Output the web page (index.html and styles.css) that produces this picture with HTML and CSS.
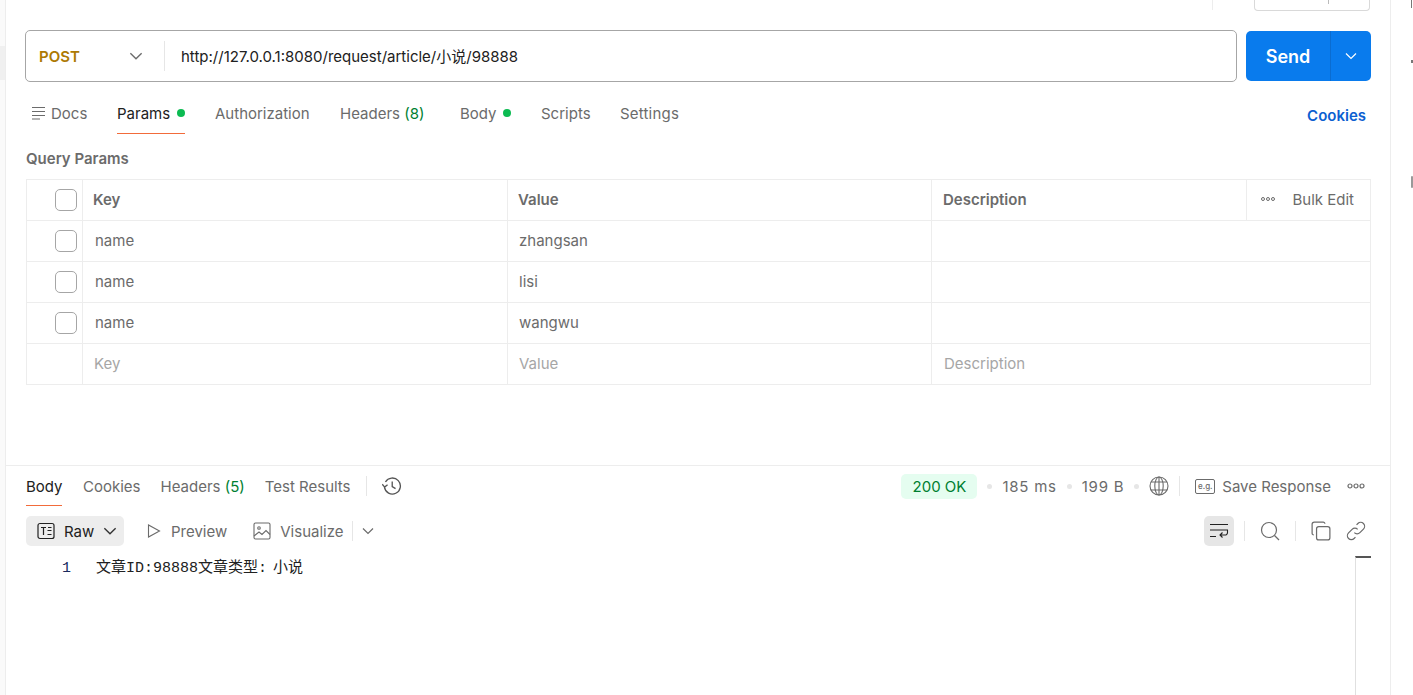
FILE: index.html
```html
<!DOCTYPE html>
<html lang="en">
<head>
<meta charset="utf-8">
<title>Postman</title>
<link rel="stylesheet" href="styles.css">
</head>
<body>
<div class="app">
  <aside class="left-rail"><div class="rail-active"></div></aside>
  <main class="main">
    <section class="request">
      <div class="top-strip">
        <div class="top-divider"></div>
        <div class="top-box"><span class="top-box-split"></span></div>
      </div>
      <div class="url-row">
        <div class="url-bar">
          <div class="method"><span class="method-name">POST</span>
            <svg class="ic-chev method-chev" viewBox="0 0 16 16"><path d="M3 5.500l5 5 5-5"/></svg>
          </div>
          <div class="url-text">http://127.0.0.1:8080/request/article/小说/98888</div>
        </div>
        <div class="send">
          <div class="send-main">Send</div>
          <div class="send-arrow"><svg class="ic-chev white" viewBox="0 0 16 16"><path d="M3 5.500l5 5 5-5"/></svg></div>
        </div>
      </div>
      <nav class="req-tabs">
        <div class="tab docs">
          <svg class="ic-docs" viewBox="0 0 14 14"><path d="M0 1.500h13M0 5.500h13M0 9.500h13M0 13h8"/></svg>Docs</div>
        <div class="tab active params">Params<i class="dot"></i></div>
        <div class="tab auth">Authorization</div>
        <div class="tab headers">Headers <em class="count">(8)</em></div>
        <div class="tab body-tab">Body<i class="dot"></i></div>
        <div class="tab scripts">Scripts</div>
        <div class="tab settings">Settings</div>
        <div class="cookies">Cookies</div>
      </nav>
      <div class="query-title">Query Params</div>
      <div class="params-table">
        <div class="row head">
          <div class="c c-check"><span class="checkbox"></span></div>
          <div class="c c-key">Key</div>
          <div class="c c-val">Value</div>
          <div class="c c-desc">Description</div>
          <div class="c c-bulk">
            <svg class="ic-dots" viewBox="0 0 14 4"><circle cx="2" cy="2" r="1.500"/><circle cx="7" cy="2" r="1.500"/><circle cx="12" cy="2" r="1.500"/></svg>
            <span>Bulk Edit</span>
          </div>
        </div>
        <div class="row">
          <div class="c c-check"><span class="checkbox"></span></div>
          <div class="c c-key cell">name</div>
          <div class="c c-val cell">zhangsan</div>
          <div class="c c-desc wide"></div>
        </div>
        <div class="row">
          <div class="c c-check"><span class="checkbox"></span></div>
          <div class="c c-key cell">name</div>
          <div class="c c-val cell">lisi</div>
          <div class="c c-desc wide"></div>
        </div>
        <div class="row">
          <div class="c c-check"><span class="checkbox"></span></div>
          <div class="c c-key cell">name</div>
          <div class="c c-val cell">wangwu</div>
          <div class="c c-desc wide"></div>
        </div>
        <div class="row last">
          <div class="c c-check"></div>
          <div class="c c-key cell ph">Key</div>
          <div class="c c-val cell ph">Value</div>
          <div class="c c-desc wide cell ph">Description</div>
        </div>
      </div>
    </section>
    <section class="response">
      <div class="res-head">
        <div class="tab active res-body">Body</div>
        <div class="tab res-tab">Cookies</div>
        <div class="tab res-tab">Headers <em class="count">(5)</em></div>
        <div class="tab res-tab">Test Results</div>
        <span class="vsep hist-sep"></span>
        <svg class="ic-history" viewBox="1 1 18 18"><path d="M3.200 11a7.200 7.200 0 1 0 .9-4.600M1.200 8.400l2.200 2.600 2.600-2.200M10.200 6v4.600l3 1.800"/></svg>
        <div class="res-meta">
          <span class="status">200 OK</span>
          <i class="meta-dot"></i><span class="metric">185 ms</span>
          <i class="meta-dot"></i><span class="metric">199 B</span>
          <i class="meta-dot"></i>
          <svg class="ic-globe" viewBox="0 0 20 20"><circle cx="10" cy="10" r="9"/><ellipse cx="10" cy="10" rx="4.200" ry="9"/><path d="M2 6h16M2 14h16M10 1v18"/></svg>
          <span class="vsep"></span>
          <span class="eg">e.g.</span><span>Save Response</span>
          <svg class="ic-dots big" viewBox="0 0 18 6"><circle cx="3" cy="3" r="2"/><circle cx="9" cy="3" r="2"/><circle cx="15" cy="3" r="2"/></svg>
        </div>
      </div>
      <div class="res-tools">
        <div class="raw">
          <svg class="ic-raw" viewBox="0 0 18 18"><rect x="1" y="1.500" width="16" height="15" rx="2"/><path d="M4 5.500h5M6.500 5.500v7.500M10.500 8.500h4M10.500 12.500h4M11 5.500h3.500"/></svg>
          <span>Raw</span>
          <svg class="ic-chev dark" viewBox="0 0 16 16"><path d="M3 5.500l5 5 5-5"/></svg>
        </div>
        <div class="tool preview">
          <svg class="ic-play" viewBox="0 0 14 14"><path d="M1.500 1v12l11-6z"/></svg>Preview</div>
        <div class="tool visualize">
          <svg class="ic-image" viewBox="0 0 18 18"><rect x="1" y="1" width="16" height="16" rx="1.500"/><circle cx="6" cy="6" r="1.300"/><path d="M1 14l5-4 3 2.500 4-4 4 4"/></svg>Visualize</div>
        <span class="vsep"></span>
        <svg class="ic-chev grey" viewBox="0 0 16 16"><path d="M3 5.500l5 5 5-5"/></svg>
        <div class="tools-right">
          <div class="wrap-btn">
            <svg viewBox="0 0 20 16"><path d="M1 1.500h18M1 7h18M1 13.500h6M18.500 7v2.500a2.500 2.500 0 0 1-2.500 2.500h-5M13.500 9.500L11 12l2.500 2.500"/></svg>
          </div>
          <span class="vsep"></span>
          <svg class="ic-search" viewBox="0 0 20 20"><circle cx="9" cy="9" r="7.500"/><path d="M14.500 14.500l4.500 4.500"/></svg>
          <span class="vsep"></span>
          <svg class="ic-copy" viewBox="0 0 18 18"><rect x="5" y="5" width="12" height="12" rx="2"/><path d="M2.500 12.500A1.500 1.500 0 0 1 1 11V3a2 2 0 0 1 2-2h8a1.500 1.500 0 0 1 1.500 1.500"/></svg>
          <svg class="ic-link" viewBox="0 0 18 18"><path d="M7.500 10.500a3.500 3.500 0 0 0 5 0l3.200-3.200a3.500 3.500 0 0 0-5-5L9.500 3.500M10.500 7.500a3.500 3.500 0 0 0-5 0l-3.200 3.200a3.500 3.500 0 0 0 5 5l1.200-1.200"/></svg>
        </div>
      </div>
      <div class="code">
        <div class="line-no">1</div>
        <div class="code-text">文章ID:98888文章类型: 小说</div>
        <div class="scrollbar"></div>
      </div>
    </section>
  </main>
  <aside class="right-rail">
    <span class="rail-mark m1"></span>
    <span class="rail-mark m2"></span>
    <span class="rail-mark m3"></span>
  </aside>
</div>
</body>
</html>
```

FILE: styles.css
```css
* { box-sizing: border-box; }
html, body { margin: 0; height: 100%; overflow: hidden; background: #fff; }
body { font-family: Inter, "Noto Sans CJK SC", sans-serif; font-size: 15px; color: #6b6b6b; }
.app { display: flex; height: 695px; width: 1413px; }
.left-rail { width: 6px; flex: none; background: #fafafa; border-right: 1px solid #ededed; padding-top: 46px; }
.rail-active { height: 34px; background: #f0f0f0; }
.main { width: 1385px; flex: none; border-right: 1px solid #ededed; display: flex; flex-direction: column; }
.right-rail { flex: 1; position: relative; }
.rail-mark { position: absolute; left: 20px; width: 3px; background: #777; }
.m1 { top: 0; height: 8px; left: 20px; width: 1px; }
.m2 { top: 60px; height: 3px; left: 20px; }
.m3 { top: 176px; height: 12px; left: 20px; width: 2px; border-radius: 2px; background: #999; }

.request { height: 465px; flex: none; padding-left: 19px; padding-right: 19px; }
.top-strip { height: 30px; display: flex; align-items: flex-start; }
.top-divider { width: 1px; height: 10px; background: #ededed; margin-left: 1187px; }
.top-box { width: 116px; height: 11px; margin-left: 41px; border: 1px solid #d9d9d9; border-top: 0; border-radius: 0 0 4px 4px; position: relative; }
.top-box-split { position: absolute; left: 73px; top: 0; width: 1px; height: 4px; background: #bbb; }

.url-row { display: flex; gap: 9px; height: 52px; }
.url-bar { width: 1212px; flex: none; border: 1px solid #a6a6a6; border-radius: 5px; display: flex; align-items: center; }
.method { width: 139px; height: 30px; flex: none; padding-left: 13px; padding-right: 19px; display: flex; align-items: center; justify-content: space-between; border-right: 1px solid #e6e6e6; }
.method-name { color: #ad7a03; font-weight: 600; }
.ic-chev { width: 16px; height: 16px; fill: none; stroke: #6b6b6b; stroke-width: 1.200; flex: none; }
.method-chev { width: 18px; height: 18px; }
.ic-chev.white { stroke: #fff; width: 16px; height: 16px; }
.ic-chev.dark { stroke: #333; width: 18px; height: 18px; margin-left: -2px; }
.ic-chev.grey { width: 16px; height: 16px; margin-left: 7px; }
.url-text { padding-left: 16px; color: #212121; position: relative; top: -1px; }

.send { width: 125px; height: 50px; margin-top: 1px; background: #097bed; border-radius: 5px; display: flex; color: #fff; }
.send-main { width: 85px; display: flex; align-items: center; justify-content: center; font-weight: 600; font-size: 18px; border-right: 1px solid #0a6cd0; }
.send-arrow { flex: 1; display: flex; align-items: center; justify-content: center; }

.req-tabs { display: flex; height: 69px; position: relative; align-items: flex-start; }
.tab { color: #6b6b6b; display: flex; align-items: center; white-space: pre; height: 20px; }
.req-tabs .tab { margin-top: 21px; }
.docs { margin-left: 7px; width: 85px; }
.ic-docs { width: 14px; height: 14px; fill: none; stroke: #6b6b6b; stroke-width: 1.200; margin-right: 5px; }
.params { width: 98px; position: relative; }
.tab.active { color: #212121; }
.params::after { content: ""; position: absolute; left: 0; top: 30px; width: 68px; height: 1px; background: #f26b3a; }
.dot { width: 8px; height: 8px; border-radius: 50%; background: #0cbb52; margin-left: 7px; margin-top: -1px; }
.auth { width: 125px; }
.headers { width: 120px; }
.count { font-style: normal; color: #007f31; }
.body-tab { width: 81px; }
.body-tab .dot { margin-left: 6px; }
.scripts { width: 79px; }
.settings { letter-spacing: 0.2px; }
.cookies { margin-left: auto; margin-top: 24px; margin-right: 5px; color: #0c5fd1; font-weight: 600; height: 20px; line-height: 20px; }

.query-title { font-weight: 600; color: #6b6b6b; height: 21px; line-height: 17px; margin-left: 1px; margin-top: -1px; }
.params-table { border: 1px solid #ededed; border-bottom: 0; width: 1345px; margin-left: 1px; margin-top: 8px; }
.row { display: flex; height: 41px; border-bottom: 1px solid #ededed; }
.c { display: flex; align-items: center; height: 100%; padding-bottom: 2px; }
.c-check { width: 56px; flex: none; justify-content: flex-end; padding-right: 5px; padding-bottom: 0; border-right: 1px solid #ededed; }
.checkbox { width: 22px; height: 22px; border: 1px solid #a6a6a6; border-radius: 5px; display: block; }
.c-key { width: 425px; flex: none; padding-left: 10px; border-right: 1px solid #ededed; }
.c-val { width: 424px; flex: none; padding-left: 10px; border-right: 1px solid #ededed; }
.c-desc { width: 315px; flex: none; padding-left: 11px; }
.head .c-desc { width: 314px; }
.c-desc.wide { flex: 1; width: auto; }
.head .c { font-weight: 600; }
.cell { padding-left: 11px; font-weight: 400; }
.c-key.cell { padding-left: 12px; }
.c-key.cell.ph { padding-left: 11px; }
.c-desc.cell { padding-left: 12px; }
.ph { color: #a6a6a6; }
.head .c-bulk { flex: 1; border-left: 1px solid #ededed; padding-left: 14px; font-weight: 400; justify-content: space-between; padding-right: 16px; }
.ic-dots { width: 14px; height: 4px; fill: none; stroke: #6b6b6b; stroke-width: 1; }
.ic-dots.big { width: 18px; height: 6px; margin-left: 16px; stroke-width: 1.200; }

.response { flex: 1; border-top: 1px solid #ededed; padding-left: 20px; padding-right: 20px; }
.res-head { height: 40px; display: flex; align-items: center; position: relative; }
.res-head .tab { height: 40px; }
.res-body { width: 57px; position: relative; }
.res-body::after { content: ""; position: absolute; left: 0; bottom: 0; width: 36px; height: 1px; background: #f26b3a; }
.res-tab { margin-right: 20px; }
.vsep { width: 1px; height: 20px; background: #e6e6e6; flex: none; }
.hist-sep { margin-left: -5px; }
.ic-history { width: 20px; height: 20px; fill: none; stroke: #555; stroke-width: 1.200; margin-left: 15px; }
.res-meta { margin-left: auto; display: flex; align-items: center; margin-right: 5px; }
.status { height: 25px; width: 76px; background: #e5fdf0; color: #007f31; border-radius: 5px; display: flex; align-items: center; justify-content: center; }
.metric { letter-spacing: 0.75px; }
.meta-dot { width: 5px; height: 5px; border-radius: 50%; background: #e6e6e6; margin: 0 10px; }
.ic-globe { width: 20px; height: 20px; fill: none; stroke: #6b6b6b; stroke-width: 1.100; margin-right: 10px; }
.eg { width: 20px; height: 15px; border: 1px solid #6b6b6b; border-radius: 2px; font-size: 8px; display: flex; align-items: center; justify-content: center; margin-left: 15px; margin-right: 7px; font-weight: 500; }

.res-tools { height: 50px; display: flex; align-items: center; }
.raw { width: 98px; height: 30px; background: #ededed; border-radius: 5px; color: #212121; display: flex; align-items: center; padding-left: 11px; gap: 9px; }
.ic-raw { width: 18px; height: 18px; fill: none; stroke: #212121; stroke-width: 1.200; }
.tool { display: flex; align-items: center; }
.preview { margin-left: 23px; }
.ic-play { width: 14px; height: 14px; fill: none; stroke: #6b6b6b; stroke-width: 1.100; margin-right: 10px; }
.visualize { margin-left: 26px; margin-right: 8px; }
.ic-image { width: 18px; height: 18px; fill: none; stroke: #6b6b6b; stroke-width: 1.100; margin-right: 9px; }
.tools-right { margin-left: auto; display: flex; align-items: center; margin-right: 4px; }
.wrap-btn { width: 30px; height: 30px; background: #e6e6e6; border-radius: 5px; display: flex; align-items: center; justify-content: center; margin-right: 10px; }
.wrap-btn svg { width: 20px; height: 16px; fill: none; stroke: #212121; stroke-width: 1.100; }
.ic-search { width: 20px; height: 20px; fill: none; stroke: #6b6b6b; stroke-width: 1.200; margin: 0 15px; }
.ic-copy { width: 20px; height: 20px; fill: none; stroke: #6b6b6b; stroke-width: 1.100; margin-left: 15px; }
.ic-link { width: 20px; height: 20px; fill: none; stroke: #6b6b6b; stroke-width: 1.100; margin-left: 15px; }

.code { display: flex; position: relative; height: 139px; font-family: "Liberation Mono", "Noto Sans CJK SC", monospace; font-size: 15px; line-height: 18px; padding-top: 4px; }
.line-no { width: 70px; flex: none; padding-left: 36px; color: #1a2a5e; }
.code-text { color: #212121; word-spacing: -3px; }
.scrollbar { position: absolute; left: 1329px; top: 0; width: 16px; height: 100%; border-left: 1px solid #e0e0e0; border-top: 2px solid #555; }
```
